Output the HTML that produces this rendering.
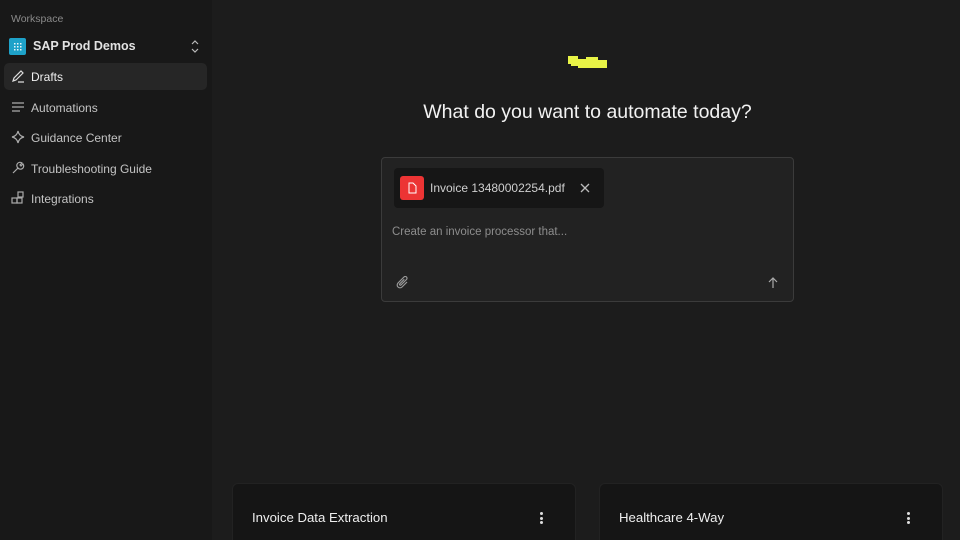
<!DOCTYPE html>
<html><head><style>
*{margin:0;padding:0;box-sizing:border-box}
html,body{width:960px;height:540px;overflow:hidden}
body{background:#1c1c1c;font-family:"Liberation Sans",sans-serif;position:relative;color:#ddd}
.side{position:absolute;left:0;top:0;width:212px;height:540px;background:#181818}
.ws{position:absolute;left:11px;top:13px;font-size:10.5px;color:#8a8a8a}
.org{position:absolute;left:9px;top:38px;width:196px;height:17px}
.org .ic{position:absolute;left:0;top:0;width:17px;height:17px;background:#1ea2c9;border-radius:2px}
.org .t{position:absolute;left:24px;top:1px;font-size:12.5px;font-weight:bold;color:#e2e2e2}
.item{position:absolute;left:4px;width:203px;height:27px;border-radius:5px;font-size:12px;color:#c4c4c4}
.item.act{background:#262626;color:#f0f0f0}
.item svg{position:absolute;left:7px;top:6px}
.item span{position:absolute;left:27px;top:7px}
h1{position:absolute;left:380px;width:415px;top:101px;text-align:center;font-weight:normal;font-size:19.5px;color:#f2f2f2}
.box{position:absolute;left:381px;top:157px;width:413px;height:145px;background:#222;border:1px solid #3b3b3b;border-radius:4px}
.chip{position:absolute;left:12px;top:10px;width:210px;height:40px;background:#161616;border-radius:4px}
.pdf{position:absolute;left:6px;top:8px;width:24px;height:24px;background:#ec3434;border-radius:3px}
.chip .n{position:absolute;left:36px;top:13px;font-size:12px;color:#cfcfcf}
.ph{position:absolute;left:10px;top:68px;font-size:11.5px;color:#8d8d8d}
.card{position:absolute;top:483px;width:344px;height:70px;background:#151515;border:1px solid #222;border-radius:6px}
.card .t{position:absolute;left:19px;top:26px;font-size:13.2px;color:#eee}
.dots{position:absolute;right:32px;top:28px;width:3px}
.dots i{display:block;width:3px;height:3px;background:#ddd;border-radius:50%;margin-bottom:1.5px}
</style></head><body>
<div class="side">
<div class="ws">Workspace</div>
<div class="org"><div class="ic"><svg width="17" height="17"><g fill="#fff" opacity=".9"><rect x="5" y="5" width="1.5" height="1.5"/><rect x="8" y="5" width="1.5" height="1.5"/><rect x="11" y="5" width="1.5" height="1.5"/><rect x="5" y="8" width="1.5" height="1.5"/><rect x="8" y="8" width="1.5" height="1.5"/><rect x="11" y="8" width="1.5" height="1.5"/><rect x="5" y="11" width="1.5" height="1.5"/><rect x="8" y="11" width="1.5" height="1.5"/><rect x="11" y="11" width="1.5" height="1.5"/></g></svg></div><div class="t">SAP Prod Demos</div>
<svg style="position:absolute;left:181px;top:1px" width="10" height="15"><path d="M2 5l3-3 3 3M2 10l3 3 3-3" stroke="#bbb" fill="none" stroke-width="1.2"/></svg></div>
<div class="item act" style="top:63px"><svg width="14" height="14" fill="none" stroke="#ddd" stroke-width="1.2"><path d="M2 12l1-3 7-7 2 2-7 7-3 1zM7 13h6"/></svg><span>Drafts</span></div>
<div class="item" style="top:94px"><svg width="14" height="14" fill="none" stroke="#aaa" stroke-width="1.2"><path d="M1 3h12M1 7h12M1 11h8"/></svg><span>Automations</span></div>
<div class="item" style="top:124px"><svg width="14" height="14" fill="none" stroke="#aaa" stroke-width="1.2"><path d="M7 1q1 5 6 6q-5 1-6 6q-1-5-6-6q5-1 6-6z"/></svg><span>Guidance Center</span></div>
<div class="item" style="top:155px"><svg width="14" height="14" fill="none" stroke="#aaa" stroke-width="1.2"><path d="M2 12l5-5a3 3 0 0 1 4-5l-2 2 1 1 2-2a3 3 0 0 1-5 4l-5 5z"/></svg><span>Troubleshooting Guide</span></div>
<div class="item" style="top:185px"><svg width="14" height="14" fill="none" stroke="#aaa" stroke-width="1.2"><rect x="1" y="7" width="5" height="5"/><rect x="6" y="7" width="5" height="5"/><rect x="7" y="1" width="5" height="5"/></svg><span>Integrations</span></div>
</div>
<svg style="position:absolute;left:567px;top:55px" width="42" height="15" fill="#e8f346"><rect x="1" y="1" width="10" height="8"/><rect x="11" y="4" width="8" height="5"/><rect x="19" y="2" width="12" height="6"/><rect x="11" y="8" width="29" height="5"/><rect x="4" y="8" width="7" height="3"/><rect x="31" y="5" width="9" height="4"/></svg>
<h1>What do you want to automate today?</h1>
<div class="box">
<div class="chip"><div class="pdf"><svg width="24" height="24" fill="none" stroke="#fff" stroke-width="1"><path d="M9 7h4l3 3v7h-7z"/></svg></div><div class="n">Invoice 13480002254.pdf</div>
<svg style="position:absolute;left:186px;top:15px" width="10" height="10" stroke="#bbb" stroke-width="1.3"><path d="M1 1l8 8M9 1l-8 8"/></svg></div>
<div class="ph">Create an invoice processor that...</div>
<svg style="position:absolute;left:14px;top:118px" width="14" height="14" fill="none" stroke="#999" stroke-width="1.2"><path d="M11 6l-5 5a2.5 2.5 0 0 1-4-4l6-6a1.7 1.7 0 0 1 2.5 2.5l-5.5 5.5a.8.8 0 0 1-1.2-1.2l4.5-4.5"/></svg>
<svg style="position:absolute;left:385px;top:119px" width="12" height="12" fill="none" stroke="#aaa" stroke-width="1.2"><path d="M6 11V1M2 5l4-4 4 4"/></svg>
</div>
<div class="card" style="left:232px"><div class="t">Invoice Data Extraction</div><div class="dots"><i></i><i></i><i></i></div></div>
<div class="card" style="left:599px"><div class="t">Healthcare 4-Way</div><div class="dots"><i></i><i></i><i></i></div></div>
</body></html>
